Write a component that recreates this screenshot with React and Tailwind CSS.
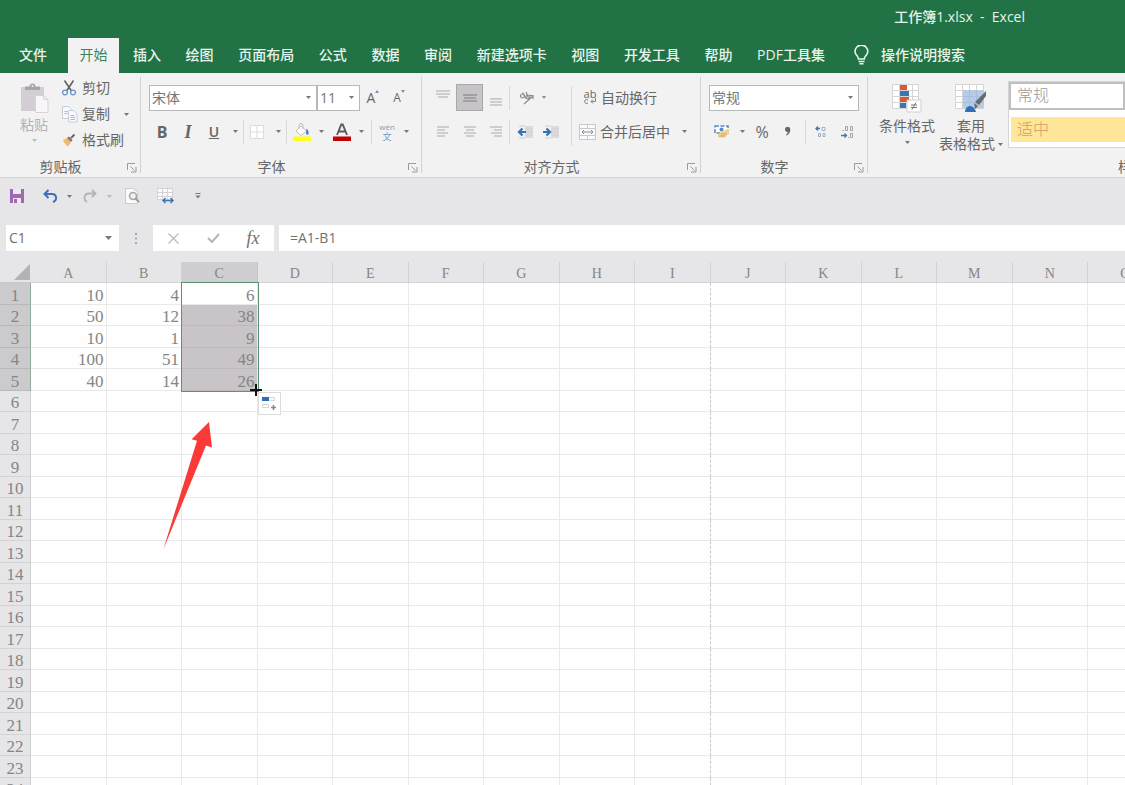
import React from "react";

const columns = ["A", "B", "C", "D", "E", "F", "G", "H", "I", "J", "K", "L", "M", "N", "O", "P"];
const data = [
  [10, 4, 6],
  [50, 12, 38],
  [10, 1, 9],
  [100, 51, 49],
  [40, 14, 26],
];
const rowCount = 25;
const tabs = ["插入", "绘图", "页面布局", "公式", "数据", "审阅", "新建选项卡", "视图", "开发工具", "帮助", "PDF工具集"];

function Caret({ className = "fill-[#777]" }) {
  return (
    <svg width="5" height="3" viewBox="0 0 5 3" className={className} aria-hidden="true">
      <path d="M0 0h5L2.5 3z" />
    </svg>
  );
}

function Tool({ label, className, children }) {
  return (
    <button type="button" aria-label={label} title={label} className={`flex h-full shrink-0 items-center justify-center ${className}`}>
      {children}
    </button>
  );
}

function Drop({ label, className = "w-4", tone }) {
  return (
    <Tool label={label} className={className}>
      <Caret className={tone} />
    </Tool>
  );
}

function Sep() {
  return <div className="h-6 w-px shrink-0 bg-[#d9d9d9]" />;
}

function Launcher({ label }) {
  return (
    <button type="button" aria-label={label} className="absolute right-1 bottom-1">
      <svg width="10" height="10" viewBox="0 0 10 10" fill="none" stroke="#9a9a9a" aria-hidden="true">
        <path d="M.5 7V.5H8M3.5 3.5l4 4M9 4v5H4" />
      </svg>
    </button>
  );
}

function Group({ name, className, launcher = true, children }) {
  return (
    <section aria-label={name} className={`relative flex shrink-0 flex-col ${className}`}>
      <div className="h-[84px]">{children}</div>
      <div className={launcher ? "pr-5 text-center leading-5" : "text-center leading-5"}>{name}</div>
      {launcher && <Launcher label={`${name}设置`} />}
      <div className="absolute top-1 right-0 bottom-1 w-px bg-[#d2d2d2]" />
    </section>
  );
}

function Picker({ label, value, className }) {
  return (
    <label className={`relative block h-[26px] shrink-0 ${className}`}>
      <select aria-label={label} defaultValue={value} className="h-full w-full appearance-none border border-[#b8b8b8] bg-white pl-0.5 text-sm text-[#777]">
        <option>{value}</option>
      </select>
      <span className="pointer-events-none absolute inset-y-0 right-1.5 flex items-center">
        <Caret />
      </span>
    </label>
  );
}

function Lines({ rows, color = "#cfcdd0", className = "" }) {
  return (
    <svg width="14" height="14" viewBox="0 0 14 14" stroke={color} strokeWidth="2" className={className} aria-hidden="true">
      {rows.map(([x1, x2, y]) => (
        <path key={y} d={`M${x1} ${y}H${x2}`} />
      ))}
    </svg>
  );
}

function Indent({ out }) {
  return (
    <svg width="17" height="14" viewBox="0 0 17 14" aria-hidden="true">
      <path d="M8 1h8v12H8z" fill="#dcdcdd" />
      <path d="M8 4h8M8 7h8M8 10h8M2 1h6M2 13h6" stroke="#cfcfd0" />
      {out ? (
        <path d="M9 7H2M5.500 3.500L2 7l3.500 3.500" fill="none" stroke="#2f74b5" strokeWidth="2.200" />
      ) : (
        <path d="M0 7h7M3.500 3.500L7 7l-3.500 3.500" fill="none" stroke="#2f74b5" strokeWidth="2.200" />
      )}
    </svg>
  );
}

function Ribbon() {
  return (
    <div className="flex h-[105px] shrink-0 overflow-hidden border-b border-[#d4d4d4] bg-[#f2f2f2] text-sm text-[#666]">
      <Group name="剪贴板" className="w-[141px]">
        <div className="flex pt-0.5">
          <button type="button" className="mt-2 ml-[18px] flex w-8 flex-col items-center text-[#b5b0b5]">
            <svg width="30" height="32" viewBox="0 0 30 32" aria-hidden="true">
              <path d="M2 4h23v24H2z" fill="#d3cdd4" />
              <path d="M6 3.500h4.500a3 3 0 0 1 6 0H21V7H6z" fill="#aaa5aa" />
              <circle cx="13.500" cy="3" r="1" fill="#f2f2f2" />
              <path d="M16.500 12.500h8l4.500 4v13H16.500z" fill="#faf5fb" stroke="#d9d2da" />
              <path d="M24.500 12.500v4H29" fill="none" stroke="#d9d2da" />
            </svg>
            <span className="leading-5">粘贴</span>
            <Caret className="mt-1 fill-[#bbb]" />
          </button>
          <div className="ml-3 flex flex-col">
            <button type="button" className="flex h-[26px] items-center gap-1.5">
              <svg width="14" height="16" viewBox="0 0 14 16" fill="none" aria-hidden="true">
                <path d="M2.500 0.500l7 10.500M11.500 0.500l-7 10.500" stroke="#5d5d60" strokeWidth="1.500" />
                <circle cx="3" cy="12.500" r="2.400" stroke="#6d94cc" strokeWidth="1.300" />
                <circle cx="11" cy="12.500" r="2.400" stroke="#6d94cc" strokeWidth="1.300" />
              </svg>
              剪切
            </button>
            <div className="flex h-[26px] items-center">
              <button type="button" className="flex items-center gap-1">
                <svg width="16" height="17" viewBox="0 0 16 17" fill="#f7f9fc" stroke="#c5cedc" aria-hidden="true">
                  <path d="M.5.5h6l3 3v9h-9z" />
                  <path d="M6.500 4.500h5l3.500 3.500v8H6.500z" />
                  <path d="M8.500 9.500h4M8.500 11.500h4.500M8.500 13.500h4.500M2.500 5.500h3M2.500 7.500h3" stroke="#9dbbe2" />
                </svg>
                复制
              </button>
              <Drop label="复制选项" className="ml-2 w-4" />
            </div>
            <button type="button" className="flex h-[26px] items-center gap-1.5">
              <svg width="14" height="13" viewBox="0 0 14 13" aria-hidden="true">
                <path d="M1 6l4-2 4 4-3 4.500C4 11 2 9 1 6z" fill="#f0b96f" />
                <path d="M5 4l2-1.500L10.500 6 9 8z" fill="#777" />
                <path d="M9 4l3.500-3.500" stroke="#666" strokeWidth="2" />
              </svg>
              格式刷
            </button>
          </div>
        </div>
      </Group>

      <Group name="字体" className="w-[281px]">
        <div className="flex flex-col gap-[7px] pt-[11px] pl-2">
          <div className="flex h-[27px] items-center">
            <Picker label="字体" value="宋体" className="w-[168px]" />
            <Picker label="字号" value="11" className="w-[43px]" />
            <Tool label="增大字号" className="w-[26px]">
              <span className="text-sm">A</span>
              <svg width="4" height="3" viewBox="0 0 4 3" className="mb-3 fill-[#7d92b5]"><path d="M0 3h4L2 0z" /></svg>
            </Tool>
            <Tool label="减小字号" className="w-[26px]">
              <span className="text-xs">A</span>
              <svg width="4" height="3" viewBox="0 0 4 3" className="mb-3 fill-[#7d92b5]"><path d="M0 0h4L2 3z" /></svg>
            </Tool>
          </div>
          <div className="flex h-[27px] items-center">
            <Tool label="加粗" className="w-[26px] text-base font-bold">B</Tool>
            <Tool label="倾斜" className="w-[26px] font-['Liberation_Serif',serif] text-lg font-bold italic">I</Tool>
            <Tool label="下划线" className="w-[26px] text-sm font-semibold underline">U</Tool>
            <Drop label="下划线选项" />
            <Sep />
            <Tool label="边框" className="w-[26px]">
              <svg width="14" height="14" viewBox="0 0 14 14" fill="#fff" stroke="#dcdcdc" aria-hidden="true">
                <path d="M.5.5h13v13H.5zM7 .5v13M.5 7h13" />
              </svg>
            </Tool>
            <Drop label="边框选项" />
            <Sep />
            <Tool label="填充颜色" className="ml-0.5 w-[26px]">
              <svg width="18" height="18" viewBox="0 0 18 18" aria-hidden="true">
                <path d="M3 8l5-5 5.500 5L8 12.500z" fill="#fff" stroke="#bdbdbd" />
                <path d="M6 6V2.500a2 2 0 0 1 4 0V6" fill="none" stroke="#bdbdbd" />
                <path d="M13.500 5.500c2.500 2 2.500 4.500 1.500 6.500l-2-1z" fill="#4b7fc5" />
                <path d="M0 13.500h18V18H0z" fill="#ffff1f" />
              </svg>
            </Tool>
            <Drop label="填充颜色选项" className="w-3" />
            <Tool label="字体颜色" className="ml-0.5 w-[26px]">
              <svg width="18" height="18" viewBox="0 0 18 18" aria-hidden="true">
                <path d="M4 12L8.300 1.500h1.400L14 12M5.500 8.500h7" fill="none" stroke="#5a5a5f" strokeWidth="1.900" />
                <path d="M0 13.500h18V18H0z" fill="#c40000" />
              </svg>
            </Tool>
            <Drop label="字体颜色选项" className="w-3" />
            <div className="w-1" />
            <Sep />
            <Tool label="拼音" className="ml-0.5 w-[26px] flex-col text-[#999]">
              <span className="text-[8px] leading-[9px]">wén</span>
              <span className="text-[9px] leading-[11px] text-[#6d9bd1]">文</span>
            </Tool>
            <Drop label="拼音选项" className="w-3" />
          </div>
        </div>
      </Group>

      <Group name="对齐方式" className="w-[279px]">
        <div className="flex pt-[11px] pl-2">
          <div className="flex w-[141px] shrink-0 flex-col gap-[7px]">
            <div className="flex h-[27px] items-center">
              <Tool label="顶端对齐" className="w-[26px]"><Lines className="mb-1" rows={[[0, 14, 2], [0, 14, 5], [2, 12, 8]]} /></Tool>
              <Tool label="垂直居中" className="w-[27px] border border-[#a9a7aa] bg-[#c6c4c7]"><Lines rows={[[0, 14, 4], [1, 13, 7], [0, 14, 10]]} color="#a19fa2" /></Tool>
              <Tool label="底端对齐" className="w-[26px]"><Lines className="mt-1" rows={[[1, 13, 6], [1, 13, 9], [1, 13, 12]]} /></Tool>
              <Sep />
              <Tool label="方向" className="ml-0.5 w-[30px]">
                <svg width="16" height="14" viewBox="0 0 16 14" fill="none" stroke="#8b8b8b" strokeWidth="1.200" aria-hidden="true">
                  <circle cx="3.500" cy="5" r="2" />
                  <path d="M3.500 1.500l3.500 6M7 1l2.500 6M5 13L14 5M10.500 4.500H14V8" />
                  <circle cx="9" cy="6" r="2" />
                </svg>
              </Tool>
              <Drop label="方向选项" className="w-1" />
            </div>
            <div className="flex h-[27px] items-center">
              <Tool label="左对齐" className="w-[26px]"><Lines rows={[[1, 13, 2], [1, 9, 5], [1, 12, 8], [1, 9, 11]]} /></Tool>
              <Tool label="居中" className="w-[27px]"><Lines rows={[[1, 13, 2], [3, 11, 5], [1, 13, 8], [3, 11, 11]]} /></Tool>
              <Tool label="右对齐" className="w-[26px]"><Lines rows={[[1, 13, 2], [5, 13, 5], [2, 13, 8], [5, 13, 11]]} /></Tool>
              <Sep />
              <Tool label="减少缩进" className="ml-0.5 w-[26px]"><Indent out /></Tool>
              <Tool label="增加缩进" className="w-[26px]"><Indent /></Tool>
            </div>
          </div>
          <div className="mt-0.5 h-[60px] w-px bg-[#d9d9d9]" />
          <div className="ml-[7px] flex flex-col gap-[7px]">
            <button type="button" className="flex h-[27px] items-center gap-1 pl-1">
              <span className="flex w-3.5 flex-col items-center text-[11px] leading-[8px]">
                <span>ab</span>
                <svg width="14" height="7" viewBox="0 0 14 7" fill="none" stroke="#77777d" aria-hidden="true">
                  <path d="M5 2a2 2 0 1 0 0 3" />
                  <path d="M12.500 0v3.500H8M10 1.500L8 3.500l2 2" stroke="#7388b0" />
                </svg>
              </span>
              自动换行
            </button>
            <div className="flex h-[27px] items-center">
              <button type="button" className="flex items-center gap-1">
                <svg width="17" height="16" viewBox="0 0 17 16" fill="none" aria-hidden="true">
                  <path d="M.5.5h16v15H.5zM.5 4.500h16M.5 11.500h16M8.500.5v4M8.500 11.500v4" stroke="#c8c8c8" fill="#fafafa" />
                  <path d="M3 8h11M5 6L3 8l2 2M12 6l2 2-2 2" stroke="#7e8fae" />
                </svg>
                合并后居中
              </button>
              <Drop label="合并选项" className="ml-1.5 w-4" />
            </div>
          </div>
        </div>
      </Group>

      <Group name="数字" className="w-[167px]">
        <div className="flex flex-col gap-[7px] pt-[11px] pl-2">
          <div className="flex h-[27px] items-center">
            <Picker label="数字格式" value="常规" className="w-[150px]" />
          </div>
          <div className="flex h-[27px] items-center">
            <Tool label="会计数字格式" className="w-[26px]">
              <svg width="16" height="14" viewBox="0 0 16 14" aria-hidden="true">
                <path d="M1 1h13v7H1z" fill="#fff" stroke="#5a86c2" strokeWidth="1.500" strokeDasharray="4 1.500" />
                <circle cx="7.500" cy="4.500" r="2" fill="#5a86c2" />
                <path d="M4 9l5-3 6-2v4l-5 5-6-1z" fill="#f2d08f" />
                <path d="M5 11h6M7 9h6" stroke="#d9a95a" />
              </svg>
            </Tool>
            <Drop label="会计格式选项" className="w-3.5" />
            <Tool label="百分比样式" className="w-[26px] text-base">%</Tool>
            <Tool label="千位分隔样式" className="w-[26px]">
              <svg width="6" height="9" viewBox="0 0 6 9" fill="#666" aria-hidden="true">
                <path d="M0 2.500a2.500 2.500 0 0 1 5.300 0C5.300 5.500 4 7.500 1.500 8.500L1 7.500c1.200-.7 1.800-1.500 1.900-2.500C1.200 5.200 0 4.200 0 2.500z" />
              </svg>
            </Tool>
            <div className="w-1" />
            <Sep />
            <Tool label="增加小数位数" className="ml-0.5 w-[26px]">
              <svg width="12" height="12" viewBox="0 0 12 12" fill="none" aria-hidden="true">
                <path d="M5 2.500H1M3 .5l-2 2 2 2" stroke="#3e78b8" strokeWidth="1.300" />
                <path d="M7 1.500h3v3H7zM3.500 7.500h2v3h-2zM8 7.500h2v3H8z" stroke="#a3b0c4" />
              </svg>
            </Tool>
            <Tool label="减少小数位数" className="w-[26px]">
              <svg width="13" height="13" viewBox="0 0 13 13" fill="none" aria-hidden="true">
                <path d="M4.500 1.500h2v4h-2zM9.500 1.500h2v4h-2zM9.500 8.500h2v4h-2z" stroke="#a5a5a5" />
                <path d="M1.500 5.500h1.500M7 12.500h1" stroke="#9a9a9a" />
                <path d="M0 10.500h5M3.500 8.500l2 2-2 2" stroke="#3e78b8" strokeWidth="1.300" />
              </svg>
            </Tool>
          </div>
        </div>
      </Group>

      <Group name="样式" className="w-[528px]" launcher={false}>
        <div className="flex pt-2.5">
          <button type="button" className="ml-2 flex w-[62px] shrink-0 flex-col items-center">
            <svg width="30" height="30" viewBox="0 0 30 30" aria-hidden="true">
              <path d="M.5 1.500h26v24H.5zM.5 7.500h26M.5 13.500h26M.5 19.500h26M7.500 1.500v24M14.500 1.500v24M20.500 1.500v24" fill="#fff" stroke="#d5d5d5" />
              <path d="M8 2h7v5H8zM8 14h9v5H8z" fill="#d9583a" />
              <path d="M8 8h9v5H8zM8 20h6v5H8z" fill="#3f74b3" />
              <path d="M15 17h14v12H15z" fill="#fff" stroke="#cfcfcf" />
              <path d="M19 22h6M19 24.500h6M24 19.500l-4 7" stroke="#777" />
            </svg>
            <span className="mt-1 leading-[18px]">条件格式</span>
            <Caret className="mt-1.5 fill-[#777]" />
          </button>
          <button type="button" className="flex w-[66px] shrink-0 flex-col items-center">
            <svg width="32" height="30" viewBox="0 0 32 30" aria-hidden="true">
              <path d="M.5 1.500h28v24H.5zM.5 7.500h28M.5 13.500h28M.5 19.500h28M7.500 1.500v24M14.500 1.500v24M21.500 1.500v24" fill="#fff" stroke="#d5d5d5" />
              <path d="M8 7h21v18H8z" fill="#b7cbe6" />
              <path d="M8 13.500h21M8 19.500h21M14.500 7v18M21.500 7v18" stroke="#a6bfdf" />
              <path d="M10 29c0-4 3-6 5-6s5 2 6 6z" fill="#2f70b8" />
              <path d="M20 19L31 8v5l-7 9zM19 20l4 3-3 3z" fill="#6a6a6a" />
            </svg>
            <span className="mt-1 leading-[18px]">套用</span>
            <span className="flex items-center gap-[3px] leading-[18px]">表格格式 <Caret /></span>
          </button>
          <div className="-mt-0.5 ml-1 flex h-[67px] flex-1 flex-col gap-[7px] overflow-hidden border border-[#d5d5d5] bg-white font-['Liberation_Serif','Noto_Sans_CJK_SC',serif] text-base font-light text-[#999]">
            <button type="button" className="h-[28px] w-[116px] shrink-0 border-2 border-[#bfbfbf] bg-white pl-1.5 text-left leading-6">常规</button>
            <button type="button" className="ml-0.5 h-[25px] w-[150px] shrink-0 bg-[#ffe699] pl-1.5 text-left leading-6 text-[#c9a263]">适中</button>
          </div>
        </div>
      </Group>
    </div>
  );
}

function QuickAccess() {
  return (
    <div className="flex h-9 shrink-0 items-center pl-1">
      <Tool label="保存" className="w-[26px]">
        <svg width="14" height="14" viewBox="0 0 14 14" aria-hidden="true">
          <path d="M0 0h14v14H0z" fill="#a067b2" />
          <path d="M3 0h8v5H3zM3 9h8v5H3z" fill="#efe7f2" />
          <path d="M4 10h3v4H4z" fill="#a067b2" />
        </svg>
      </Tool>
      <Tool label="撤消" className="ml-[7px] w-[26px]">
        <svg width="15" height="14" viewBox="0 0 15 14" fill="none" stroke="#3d71b8" strokeWidth="2" aria-hidden="true">
          <path d="M5.500 1L1.500 5l4 4M2 5h7c5 0 5.500 6.500 1 8" />
        </svg>
      </Tool>
      <Drop label="撤消选项" className="w-3" />
      <Tool label="恢复" className="ml-0.5 w-[26px]">
        <svg width="14" height="14" viewBox="0 0 14 14" fill="none" stroke="#b3b3b5" strokeWidth="1.800" aria-hidden="true">
          <path d="M9 1l3.500 3.500L9 8M12 4.500H6c-5 0-6 6-2 8.500" />
        </svg>
      </Tool>
      <Drop label="恢复选项" className="w-3" tone="fill-[#bbb]" />
      <Tool label="打印预览" className="ml-1 w-[26px]">
        <svg width="15" height="16" viewBox="0 0 15 16" aria-hidden="true">
          <path d="M.5.5h8l4 4v11H.5z" fill="#fafafa" stroke="#cdcdd0" />
          <circle cx="8" cy="8" r="3.500" fill="#f1f1f1" stroke="#a5a5a7" strokeWidth="1.500" />
          <path d="M10.500 10.500L14 14" stroke="#9a9a9c" strokeWidth="2" />
        </svg>
      </Tool>
      <Tool label="列宽" className="ml-[7px] w-[26px]">
        <svg width="17" height="16" viewBox="0 0 17 16" aria-hidden="true">
          <path d="M.5.5h15v11H.5zM.5 4.500h15M.5 8.500h15M5.500.5v11M10.500.5v11" fill="#fbfbfb" stroke="#d3d3d6" />
          <path d="M6 12.500h10M8.500 10L6 12.500 8.500 15M13.500 10l2.500 2.500-2.500 2.500" fill="none" stroke="#3f74b3" strokeWidth="1.500" />
        </svg>
      </Tool>
      <Tool label="自定义快速访问工具栏" className="ml-2.5 w-5">
        <svg width="6" height="6" viewBox="0 0 6 6" fill="#777" aria-hidden="true"><path d="M.5 0h5v1h-5zM.5 2.500h5L3 5.500z" /></svg>
      </Tool>
    </div>
  );
}

function FormulaBar() {
  return (
    <div className="mt-[11px] flex h-[26px] shrink-0 pl-1.5 text-sm text-[#707070]">
      <div className="flex w-[113px] bg-white">
        <input aria-label="名称框" defaultValue="C1" className="w-[92px] bg-transparent pl-[3px] outline-none" />
        <Tool label="名称列表" className="w-5">
          <svg width="7" height="4" viewBox="0 0 7 4" fill="#777" aria-hidden="true"><path d="M0 0h7L3.500 4z" /></svg>
        </Tool>
      </div>
      <div className="flex w-[34px] items-center justify-center">
        <svg width="2" height="11" viewBox="0 0 2 11" fill="#aaa" aria-hidden="true"><path d="M0 0h2v2H0zM0 4.500h2v2H0zM0 9h2v2H0z" /></svg>
      </div>
      <div className="flex w-[121px] bg-white">
        <Tool label="取消" className="w-10">
          <svg width="11" height="11" viewBox="0 0 11 11" stroke="#bdbdbd" strokeWidth="1.400" aria-hidden="true"><path d="M.5.5l10 10M10.500.5l-10 10" /></svg>
        </Tool>
        <Tool label="输入" className="w-10">
          <svg width="13" height="10" viewBox="0 0 13 10" fill="none" stroke="#b5b5b5" strokeWidth="2" aria-hidden="true"><path d="M1 5l4 4L12 1" /></svg>
        </Tool>
        <Tool label="插入函数" className="w-10 font-['Liberation_Serif',serif] text-lg italic">fx</Tool>
      </div>
      <input aria-label="编辑栏" defaultValue="=A1-B1" className="ml-[5px] min-w-0 flex-1 bg-white pl-[11px] outline-none" />
    </div>
  );
}

function Cell({ row, col }) {
  const value = data[row]?.[col];
  const selected = col === 2 && row < 5;
  const edge = col === 8 ? "border-r-[#c9c9c9] border-dashed [border-bottom-style:solid]" : "border-r-[#e9e9ea]";
  const fill = selected && row > 0 ? "bg-[#c8c4c8] border-b-[#bdb9bd]" : "border-b-[#e9e9ea]";
  return (
    <td className={`relative border-r border-b p-0 pt-1 pr-0.5 text-right ${edge} ${fill}`}>
      {value}
      {col === 2 && row === 0 && (
        <div className="absolute -top-px -left-px z-10 h-[110px] w-[78px] border-[1.5px] border-[#5d9275]">
          <svg width="12" height="12" viewBox="0 0 12 12" stroke="#111" strokeWidth="2" className="absolute -right-1 -bottom-[5px]" aria-hidden="true">
            <path d="M6 0v12M0 6h12" />
          </svg>
          <button type="button" aria-label="自动填充选项" className="absolute top-[109px] left-[76px] flex h-[23px] w-[23px] items-center justify-center border border-[#dcdcdc] bg-white">
            <svg width="15" height="15" viewBox="0 0 15 15" aria-hidden="true">
              <path d="M0 1h7v4H0z" fill="#2a6fb8" />
              <path d="M7.500 1.500h5v3h-5M.5 8.500h6v3h-6z" fill="none" stroke="#d5d5d5" />
              <path d="M11.500 9v5M9 11.500h5" stroke="#8a8a8a" strokeWidth="1.600" />
            </svg>
          </button>
        </div>
      )}
    </td>
  );
}

function Sheet() {
  return (
    <div className="relative mt-[11px] min-h-0 flex-1 overflow-hidden">
      <table className="w-[1239px] table-fixed border-separate border-spacing-0 bg-[#fefefe] font-['Liberation_Serif',serif] text-[17px] leading-4 text-[#858585]">
        <thead>
          <tr className="h-[21px] bg-[#e6e5e7] text-sm">
            <th className="w-[31px] border-b border-[#c9c9cb] p-0">
              <svg width="17" height="17" viewBox="0 0 17 17" fill="#b3b2b5" className="ml-auto" aria-label="全选"><path d="M16 0v16H0z" /></svg>
            </th>
            {columns.map((name) => (
              <th key={name} scope="col" className={`border-r border-b p-0 pt-1 font-normal leading-4 ${name === "C" ? "border-[#c4c4c6] bg-[#cfced0]" : "border-[#d3d2d4]"}`}>
                {name}
              </th>
            ))}
          </tr>
        </thead>
        <tbody>
          {Array.from({ length: rowCount }, (_, row) => (
            <tr key={row} className="odd:h-[22px] even:h-[21px]">
              <th scope="row" className={`border-r border-b p-0 pt-1 font-normal ${row < 5 ? "border-r-[#8fac9c] border-b-[#b9b8bb] bg-[#cbcacc]" : "border-r-[#cfcfd1] border-b-[#d3d2d4] bg-[#e6e5e7]"}`}>
                {row + 1}
              </th>
              {columns.map((name, col) => (
                <Cell key={name} row={row} col={col} />
              ))}
            </tr>
          ))}
        </tbody>
      </table>
      <svg width="50" height="128" viewBox="0 0 50 128" className="absolute top-[160px] left-[163px]" aria-hidden="true">
        <path d="M46 0L28.700 17.300l5.300 1.400L.3 127.500 43 23.500l6 2z" fill="#f93a37" />
      </svg>
    </div>
  );
}

export default function App() {
  return (
    <div className="flex h-screen flex-col overflow-hidden bg-[#e6e5e7] font-['Open_Sans','Noto_Sans_CJK_SC',sans-serif] whitespace-nowrap">
      <header className="shrink-0 bg-[#217346] text-sm font-medium text-[#e9f3ed]">
        <h1 className="flex h-[34px] items-center justify-end pr-[100px] whitespace-pre">工作簿1.xlsx  -  Excel</h1>
        <nav className="mt-1 flex h-[35px] items-stretch">
          <button type="button" className="w-[68px] pr-0.5 pb-0.5">文件</button>
          <button type="button" className="w-[51px] bg-[#f2f2f2] pb-0.5 font-normal text-[#3c8560]">开始</button>
          <div className="ml-3.5 flex w-[692px] justify-between pb-0.5">
            {tabs.map((tab) => (
              <button key={tab} type="button">{tab}</button>
            ))}
          </div>
          <button type="button" className="ml-[29px] flex items-center gap-3 pb-0.5">
            <svg width="15" height="20" viewBox="0 0 15 20" fill="none" stroke="#e9f3ed" strokeWidth="1.600" aria-hidden="true">
              <path d="M4.500 14c0-3-3.500-4-3.500-7.500a6.300 6.300 0 0 1 12.800 0C13.800 10 10.300 11 10.300 14z" />
              <path d="M4.500 16.500h6M5.500 18.800h4" />
            </svg>
            操作说明搜索
          </button>
        </nav>
      </header>
      <Ribbon />
      <QuickAccess />
      <FormulaBar />
      <Sheet />
    </div>
  );
}
